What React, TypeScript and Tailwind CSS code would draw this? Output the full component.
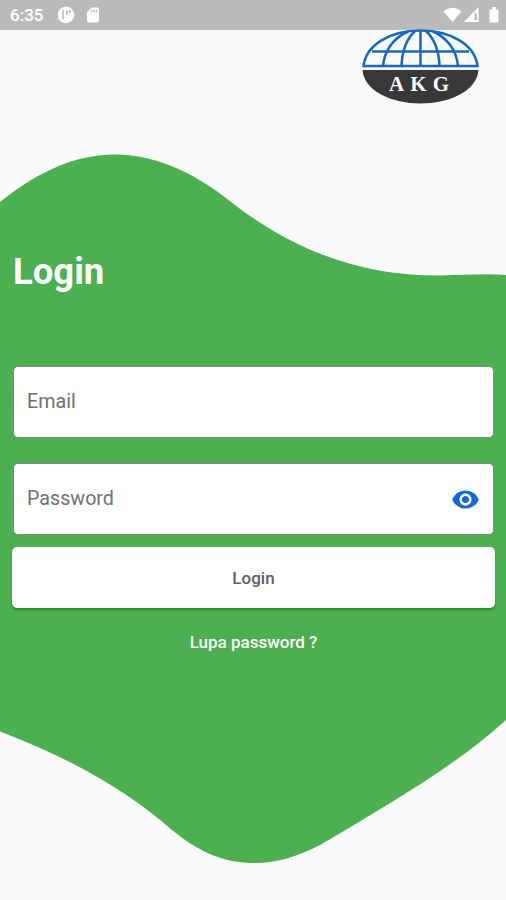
import React from "react";
import { MdRemoveRedEye } from "react-icons/md";

function StatusBar() {
  return (
    <div className="flex h-[30px] items-center justify-between bg-[#bababa] pl-[10px] pr-[7px] text-white">
      <div className="flex items-center">
        <span className="w-[47px] text-[17px] leading-[30px] font-medium">6:35</span>
        <svg className="h-[18px] w-[18px]" viewBox="0 0 18 18" fill="none">
          <circle cx="9" cy="9" r="8.3" fill="#fff" />
          <path d="M6 4v9.500" stroke="#bababa" strokeWidth="1.5" />
          <path d="M9 4h1.600v5H9zM11.800 4h2v3.500h-2z" fill="#bababa" />
        </svg>
        <svg className="ml-[12px] h-[16px] w-[13px]" viewBox="0 0 14 16" fill="#fff">
          <path d="M5 0h6.500a1.500 1.500 0 0 1 1.500 1.500v13a1.500 1.500 0 0 1-1.500 1.500h-10A1.500 1.500 0 0 1 0 14.500V5z" />
          <path d="M4.500 2.500H6v2.500H4.500zM7 2.500h1.500v2.500H7zM9.500 2.500H11v2.500H9.500z" fill="#bababa" />
        </svg>
      </div>
      <svg className="h-[18px] w-[56px]" viewBox="0 0 56 18" fill="#fff">
        <path d="M0.500 5.500Q9.500-2 18.500 5.500L9.500 16z" />
        <path d="M35.500 1v15H21zM31.500 7.500V14H34V7.500z" fillRule="evenodd" />
        <path d="M46.500 3.500H49V1h4v2.500h2.500v13h-9z" />
      </svg>
    </div>
  );
}

function Logo() {
  return (
    <svg className="h-[75px] w-[117px]" viewBox="0 0 117 75" fill="none">
      <g stroke="#1769bd" strokeWidth="2.5">
        <path d="M1.500 37C4 16 28 1.500 58.500 1.500S113 16 115.500 37z" />
        <path d="M58.500 1v36M21 37C22.500 22 31 9 46 2.500M96 37C94.500 22 86 9 71 2.500M39.500 37C40 23 44.500 10 53 2M77.500 37C77 23 72.500 10 64 2" />
        <path d="M10 22.500h97" />
      </g>
      <path d="M0.500 41h116C115 61 89 74.500 58.500 74.500S2 61 .5 41z" fill="#38383a" />
      <text
        x="27"
        y="61.500"
        textLength="60"
        fill="#fff"
        className="font-['Liberation_Serif',serif] text-[21px] font-bold"
      >
        AKG
      </text>
    </svg>
  );
}

function Wave() {
  return (
    <svg className="absolute inset-0 h-[900px] w-[506px]" viewBox="0 0 506 900">
      <path
        fill="#4caf50"
        d="M0 202C40 170 77 154.500 115 154.500C160 154.500 200 177 231 202C300 256 370 276 440 275.500C465 275 485 273.500 506 275V720C460 762 400 798 320 845C296 857 278 863 253 863C220 863 194 848 172 830C125 789 70 758 0 731.500z"
      />
    </svg>
  );
}

export default function App() {
  return (
    <div className="relative h-[900px] w-[506px] overflow-hidden bg-[#fafafa] font-[Roboto,sans-serif]">
      <Wave />
      <div className="relative">
        <StatusBar />
        <div className="flex h-[75px] justify-end pr-[27px]">
          <div className="-mt-px">
            <Logo />
          </div>
        </div>

        <form className="flex flex-col pt-[143px] pr-[12px] pl-[13px]" onSubmit={(e) => e.preventDefault()}>
          <h1 className="text-[36.5px] leading-[48px] font-bold text-white">Login</h1>

          <input
            type="email"
            placeholder="Email"
            className="mt-[70px] h-[72px] rounded-[5px] border border-[#858585] bg-white px-[13px] pb-px text-[19.7px] outline-none placeholder:text-[#707070]"
          />

          <div className="mt-[25px] flex h-[72px] items-center rounded-[5px] border border-[#858585] bg-white px-[13px]">
            <input
              type="password"
              placeholder="Password"
              className="min-w-0 flex-1 pb-px text-[19.7px] outline-none placeholder:text-[#707070]"
            />
            <button type="button" aria-label="Show password">
              <MdRemoveRedEye className="h-[29px] w-[29px] text-[#1769d2]" />
            </button>
          </div>

          <button
            type="submit"
            className="-ml-px mt-[12px] -mr-px h-[61px] rounded-[5px] bg-white pt-[2px] text-[17px] font-medium text-[#606060] shadow-[0_2px_2px_rgba(0,90,0,0.45)]"
          >
            Login
          </button>

          <a href="#" className="mt-[22px] self-center text-[17px] leading-6 font-medium text-white">
            Lupa password ?
          </a>
        </form>
      </div>
    </div>
  );
}
